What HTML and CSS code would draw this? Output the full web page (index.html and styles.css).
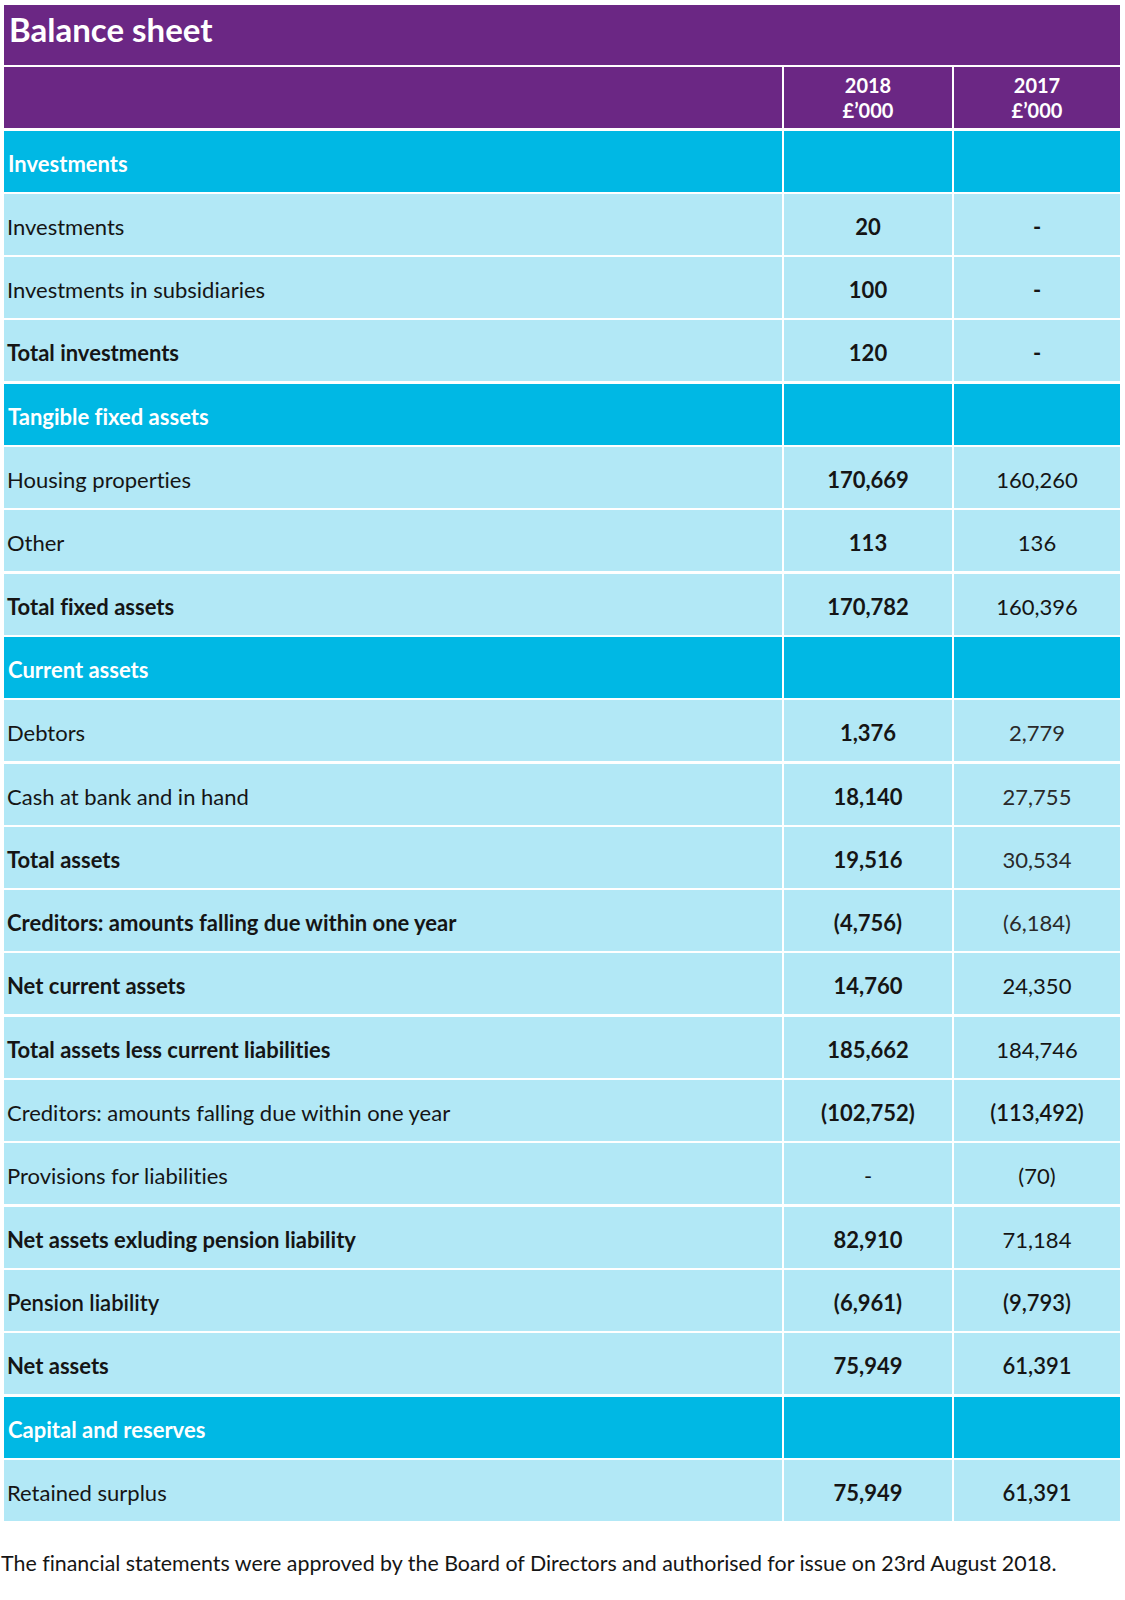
FILE: index.html
```html
<!DOCTYPE html>
<html lang="en">
<head>
<meta charset="utf-8">
<title>Balance sheet</title>
<link rel="stylesheet" href="styles.css">
</head>
<body>
<div class="sheet">
  <div class="title">Balance sheet</div>

  <div class="row head"><div class="c lab"></div><div class="c num">2018<br>£’000</div><div class="c num">2017<br>£’000</div></div>

  <div class="row sec"><div class="c lab">Investments</div><div class="c num"></div><div class="c num"></div></div>
  <div class="row"><div class="c lab">Investments</div><div class="c num b">20</div><div class="c num b">-</div></div>
  <div class="row"><div class="c lab">Investments in subsidiaries</div><div class="c num b">100</div><div class="c num b">-</div></div>
  <div class="row"><div class="c lab b">Total investments</div><div class="c num b">120</div><div class="c num b">-</div></div>

  <div class="row sec"><div class="c lab">Tangible fixed assets</div><div class="c num"></div><div class="c num"></div></div>
  <div class="row"><div class="c lab">Housing properties</div><div class="c num b">170,669</div><div class="c num">160,260</div></div>
  <div class="row"><div class="c lab">Other</div><div class="c num b">113</div><div class="c num">136</div></div>
  <div class="row"><div class="c lab b">Total fixed assets</div><div class="c num b">170,782</div><div class="c num">160,396</div></div>

  <div class="row sec"><div class="c lab">Current assets</div><div class="c num"></div><div class="c num"></div></div>
  <div class="row"><div class="c lab">Debtors</div><div class="c num b">1,376</div><div class="c num l">2,779</div></div>
  <div class="row"><div class="c lab">Cash at bank and in hand</div><div class="c num b">18,140</div><div class="c num l">27,755</div></div>
  <div class="row"><div class="c lab b">Total assets</div><div class="c num b">19,516</div><div class="c num l">30,534</div></div>
  <div class="row"><div class="c lab b">Creditors: amounts falling due within one year</div><div class="c num b">(4,756)</div><div class="c num l">(6,184)</div></div>
  <div class="row"><div class="c lab b">Net current assets</div><div class="c num b">14,760</div><div class="c num">24,350</div></div>
  <div class="row"><div class="c lab b">Total assets less current liabilities</div><div class="c num b">185,662</div><div class="c num">184,746</div></div>
  <div class="row"><div class="c lab">Creditors: amounts falling due within one year</div><div class="c num b">(102,752)</div><div class="c num m">(113,492)</div></div>
  <div class="row"><div class="c lab">Provisions for liabilities</div><div class="c num">-</div><div class="c num">(70)</div></div>
  <div class="row"><div class="c lab b">Net assets exluding pension liability</div><div class="c num b">82,910</div><div class="c num">71,184</div></div>
  <div class="row"><div class="c lab m">Pension liability</div><div class="c num b">(6,961)</div><div class="c num m">(9,793)</div></div>
  <div class="row"><div class="c lab b">Net assets</div><div class="c num b">75,949</div><div class="c num m">61,391</div></div>

  <div class="row sec"><div class="c lab">Capital and reserves</div><div class="c num"></div><div class="c num"></div></div>
  <div class="row"><div class="c lab">Retained surplus</div><div class="c num b">75,949</div><div class="c num m">61,391</div></div>
</div>
<p class="note">The financial statements were approved by the Board of Directors and authorised for issue on 23rd August 2018.</p>
</body>
</html>
```

FILE: styles.css
```css
html, body {
  margin: 0;
  padding: 0;
  background: #ffffff;
}

body {
  font-family: Lato, "Open Sans", "Liberation Sans", sans-serif;
  font-variant-ligatures: none;
  color: #151515;
}

.sheet {
  display: grid;
  grid-template-columns: 778px 168px 166px;
  grid-template-rows: 60px;
  grid-auto-rows: 61px;
  column-gap: 2px;
  row-gap: 2.3px;
  width: 1116px;
  margin: 5px 0 0 4px;
}

.title {
  grid-column: 1 / -1;
  background: #6b2784;
  color: #ffffff;
  font-weight: 700;
  font-size: 33px;
  line-height: 40px;
  padding: 4px 0 0 5px;
}

.row {
  display: contents;
}

.c {
  background: #b2e8f6;
  display: flex;
  align-items: center;
  font-size: 22px;
  line-height: 26px;
  padding-top: 5px;
  box-sizing: border-box;
}

.lab {
  padding-left: 3px;
}

.num {
  justify-content: center;
  text-align: center;
}

.b {
  font-weight: 700;
}

.m {
  font-weight: 600;
}

.l {
  font-weight: 400;
  color: #2a2a2a;
}

.head .c {
  background: #6b2784;
  color: #ffffff;
  font-weight: 700;
  font-size: 20px;
  line-height: 25px;
  padding-top: 0;
}

.sec .c {
  background: #00b8e4;
  color: #ffffff;
  font-weight: 700;
}

.sec .lab {
  padding-left: 4px;
}

.note {
  margin: 30px 0 0 0;
  padding-left: 1px;
  font-size: 21.4px;
  line-height: 24px;
  color: #151515;
}
```
